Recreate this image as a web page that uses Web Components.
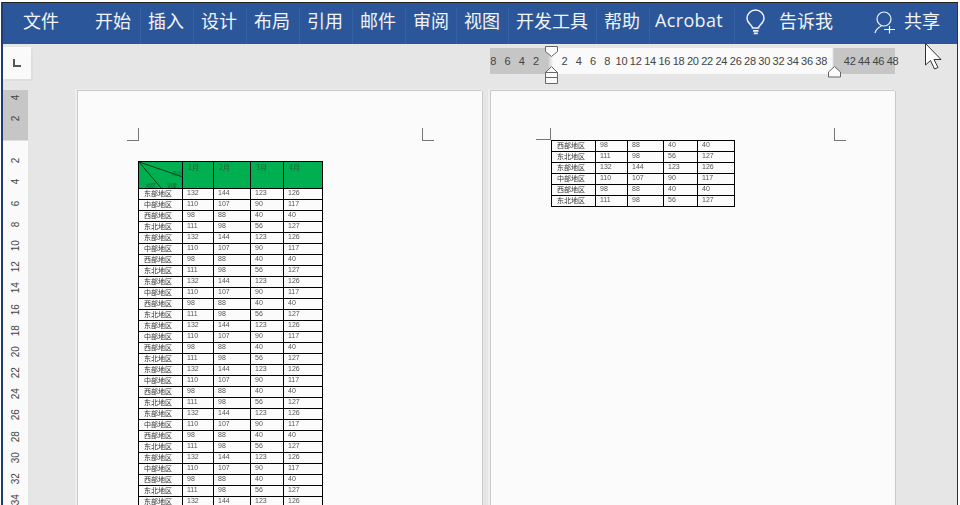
<!DOCTYPE html>
<html lang="zh"><head><meta charset="utf-8"><title>Word</title>
<style>html,body{margin:0;padding:0;background:#fff;overflow:hidden}</style></head>
<body>
<word-app>
  <word-ribbon slot="ribbon">
    <ribbon-tab class="file">文件</ribbon-tab>
    <ribbon-tab>开始</ribbon-tab><ribbon-tab>插入</ribbon-tab><ribbon-tab>设计</ribbon-tab><ribbon-tab>布局</ribbon-tab><ribbon-tab>引用</ribbon-tab><ribbon-tab>邮件</ribbon-tab><ribbon-tab style="--w:51px">审阅</ribbon-tab><ribbon-tab style="--w:52px">视图</ribbon-tab><ribbon-tab style="--w:88px">开发工具</ribbon-tab><ribbon-tab>帮助</ribbon-tab><ribbon-tab style="--w:85px" class="latin">Acrobat</ribbon-tab>
    <ribbon-assist slot="end"></ribbon-assist>
  </word-ribbon>
  <word-corner slot="corner"></word-corner>
  <v-ruler slot="vruler"></v-ruler>
  <h-ruler slot="hruler"></h-ruler>
  <doc-page slot="pages" style="--top:70px"><data-table header rows="29" start="0" cols="44,31,37,33,39"></data-table></doc-page>
  <doc-page slot="pages" style="--top:49px" class="two"><data-table rows="6" start="2" cols="44,32,36,34,37"></data-table></doc-page>
  <mouse-cursor slot="over"></mouse-cursor>
</word-app>
<script>
const def=(n,html,proto={})=>{customElements.define(n,class extends HTMLElement{
  constructor(){super();this.attachShadow({mode:'open'}).innerHTML=html;}
  connectedCallback(){proto.init&&proto.init.call(this,this.shadowRoot);}
});};
const FONT='"Noto Sans CJK SC","Liberation Sans",sans-serif';

def('word-app',`<style>
:host{display:block;width:960px;height:505px;overflow:hidden;position:relative;background:#fff;box-sizing:border-box}
.frame{height:503px;margin:2px 2px 0 1px;background:#e6e6e6;display:flex;flex-direction:column;box-sizing:border-box;border-top:1px solid #20201f;border-left:2px solid #1d3d70;border-right:1px solid #333}
.work{flex:1;min-height:0;display:flex;overflow:hidden}
.left{width:28px;display:flex;flex-direction:column;flex:none}
.main{flex:1;min-width:0;display:flex;flex-direction:column}
.pages{display:flex;gap:9px;margin:17px 0 0 47px;}
</style><div class="frame"><slot name="ribbon"></slot><div class="work">
<div class="left"><slot name="corner"></slot><slot name="vruler"></slot></div>
<div class="main"><slot name="hruler"></slot><div class="pages"><slot name="pages"></slot></div></div>
</div></div><slot name="over"></slot>`);

def('word-ribbon',`<style>
:host{display:flex;height:41px;flex:none;background:#2b579a;color:#f1f3f7;font:18px/35px ${FONT};align-items:stretch}
.tabs{display:flex;padding-left:10px}
.end{flex:1;display:flex}
</style><div class="tabs"><slot></slot></div><div class="end"><slot name="end"></slot></div>`);

def('ribbon-tab',`<style>
:host{display:block;box-sizing:border-box;width:var(--w,53px);padding-left:8px;white-space:nowrap;position:relative}
:host(.file){width:74px;padding-left:10px}
:host(.latin){font-family:"Open Sans","Liberation Sans",sans-serif;font-weight:500;padding-left:6px;letter-spacing:.35px}
i{position:absolute;right:-1px;top:4px;bottom:0;width:1px;background:#3561a3}
:host(.file) i{display:none}
</style><slot></slot><i></i>`);

def('ribbon-assist',`<style>
:host{display:flex;flex:1;align-items:flex-start;height:41px}
svg{display:block;flex:none;margin-top:5px}
.t{white-space:nowrap}
</style>
<svg width="24" height="28" viewBox="0 0 24 28" style="margin-left:10px" fill="none" stroke="#f1f3f7" stroke-width="1.500"><path d="M8.500 20c0-3-5.500-4.500-5.500-9.500a8.500 8.500 0 0 1 17 0c0 5-5.500 6.500-5.500 9.500z"/><path d="M9 22.800h5.500M9.800 25.300h4" stroke-width="1.700"/></svg>
<span class="t" style="margin-left:11px">告诉我</span>
<svg width="26" height="28" viewBox="0 0 26 28" style="margin:8px 0 0 41px" fill="none" stroke="#f1f3f7" stroke-width="1.200"><circle cx="10" cy="8" r="7"/><path d="M1 22c1-4 4-6 7-7.500M10 18.500h11M15.500 15v7.500"/></svg>
<span class="t" style="margin-left:4px">共享</span>`);

def('word-corner',`<style>
:host{display:flex;align-items:center;justify-content:center;width:28px;height:32px;margin-top:3px;background:#fafafa;box-shadow:2px 2px 0 #dedede}
svg{display:block}
</style><svg width="10" height="10" viewBox="0 0 10 10"><path d="M2 1v7h7" fill="none" stroke="#555" stroke-width="2"/></svg>`);

def('v-ruler',`<style>
:host{display:block;width:25px;margin-top:11px;height:420px;
background:linear-gradient(#c6c6c6 0,#c6c6c6 50px,#fafafa 51px);
font:10px/14px "Liberation Sans",sans-serif;color:#444;position:relative;overflow:hidden}
.list{display:flex;flex-direction:column;align-items:center;margin-top:-3px}
span{height:21.200px;display:flex;align-items:center;justify-content:center;writing-mode:vertical-rl;transform:rotate(180deg)}
</style><div class="list" id="l"></div>`,{init(r){
  const v=[4,2,'',2,4,6,8,10,12,14,16,18,20,22,24,26,28,30,32,34];
  r.getElementById('l').innerHTML=v.map(x=>`<span>${x}</span>`).join('');
}});

def('h-ruler',`<style>
:host{display:block;height:26px;margin:4px 0 0 0;position:relative}
.row{display:flex;margin-left:455px;width:414px;height:26px;align-items:center;
font:11px/26px "Liberation Sans",sans-serif;color:#444;
background:linear-gradient(90deg,transparent 4px,#c6c6c6 4px,#c6c6c6 62px,#fafafa 67px,#fafafa 346px,#c6c6c6 348px,#c6c6c6 409px,transparent 409px)}
span{flex:none;width:14.270px;text-align:center;white-space:nowrap;letter-spacing:-.2px}
svg{position:absolute;top:-3px;left:510px}
</style><div class="row" id="r"></div>
<svg width="300" height="40" viewBox="0 0 300 40" fill="#fafafa" stroke="#666" stroke-width="1">
<path d="M4.500 1.500h12v5l-6 5-6-5zM4.500 32.500v-5l6-6 6 6v5zM4.500 27.500h12v11h-12zM287.500 32v-5l6-5.500 6 5.500v5z"/></svg>`,{init(r){
  const v=[8,6,4,2,'',2,4,6,8,10,12,14,16,18,20,22,24,26,28,30,32,34,36,38,'',42,44,46,48];
  r.getElementById('r').innerHTML=v.map(x=>`<span>${x}</span>`).join('');
}});

def('doc-page',`<style>
:host{display:block;flex:none;width:404px;height:430px;box-sizing:border-box;background:#fbfbfb;position:relative;padding:var(--top) 0 0 60px;box-shadow:-1px -1px 0 #c9c9c9,1px 0 0 #c9c9c9,-3px -2px 0 #efefef}
i{position:absolute;display:block;width:11px;height:12px;top:37px;border-bottom:1px solid #777}
.a{left:49px;border-right:1px solid #777}
.b{left:344px;border-left:1px solid #777}
:host(.two) .a{left:45px;width:14px;height:11px;top:37px;}
:host(.two) .b{left:343px}
</style><i class="a"></i><i class="b"></i><slot></slot>`);

def('data-table',`<style>
:host{display:block;font:7px/8px ${FONT};color:#333;width:max-content;will-change:transform}
.g{display:grid;border-top:1px solid #000;border-left:1px solid #000;grid-auto-rows:11px;position:relative}
.c{border-right:1px solid #000;border-bottom:1px solid #000;padding-left:4px;white-space:nowrap;overflow:hidden;box-sizing:border-box}
.n{font-family:"Liberation Sans",sans-serif;color:#555}
.h{background:#00b050;height:27px;color:#1f5f35;padding-left:5px;line-height:11px;position:relative}
svg{position:absolute;left:0;top:0;display:block}
.x{position:absolute;font-size:5px;line-height:6px;color:#1f5f35}
</style><div class="g" id="g"></div>`,{init(r){
  const cols=this.getAttribute('cols').split(',').map(Number);
  const g=r.getElementById('g');
  g.style.gridTemplateColumns=cols.map(c=>c+'px').join(' ');
  const data=[['东部地区',132,144,123,126],['中部地区',110,107,90,117],['西部地区',98,88,40,40],['东北地区',111,98,56,127]];
  let h='';
  if(this.hasAttribute('header')){
    g.style.gridTemplateRows='27px';
    h+=`<div class="c h"><svg width="44" height="27" viewBox="0 0 44 27" fill="none" stroke="#0b3b1e" stroke-width="1"><path d="M0 0L44 15M0 0L23 27"/></svg><span class="x" style="left:33px;top:8px">月份</span><span class="x" style="left:7px;top:20px">地区</span><span class="x" style="left:28px;top:20px">销量</span></div>`;
    ['1月','2月','3月','4月'].forEach(t=>h+=`<div class="c h">${t}</div>`);
  }
  const start=+this.getAttribute('start'),n=+this.getAttribute('rows');
  for(let i=0;i<n;i++){
    const d=data[(start+i)%4];
    h+=d.map((v,j)=>`<div class="c ${j?'n':''}"${j?'':' style="padding-left:5px"'}>${v}</div>`).join('');
  }
  g.innerHTML=h;
}});

def('mouse-cursor',`<style>
:host{position:absolute;left:924px;top:42px;display:block;width:21px;height:30px}
svg{display:block}
</style><svg width="21" height="30" viewBox="0 0 21 30"><path d="M1.500 1.500V23l5-4.500 4 8.500 3.500-1.500-4-8h7z" fill="#fff" stroke="#333" stroke-width="1"/></svg>`);
</script>
</body></html>
